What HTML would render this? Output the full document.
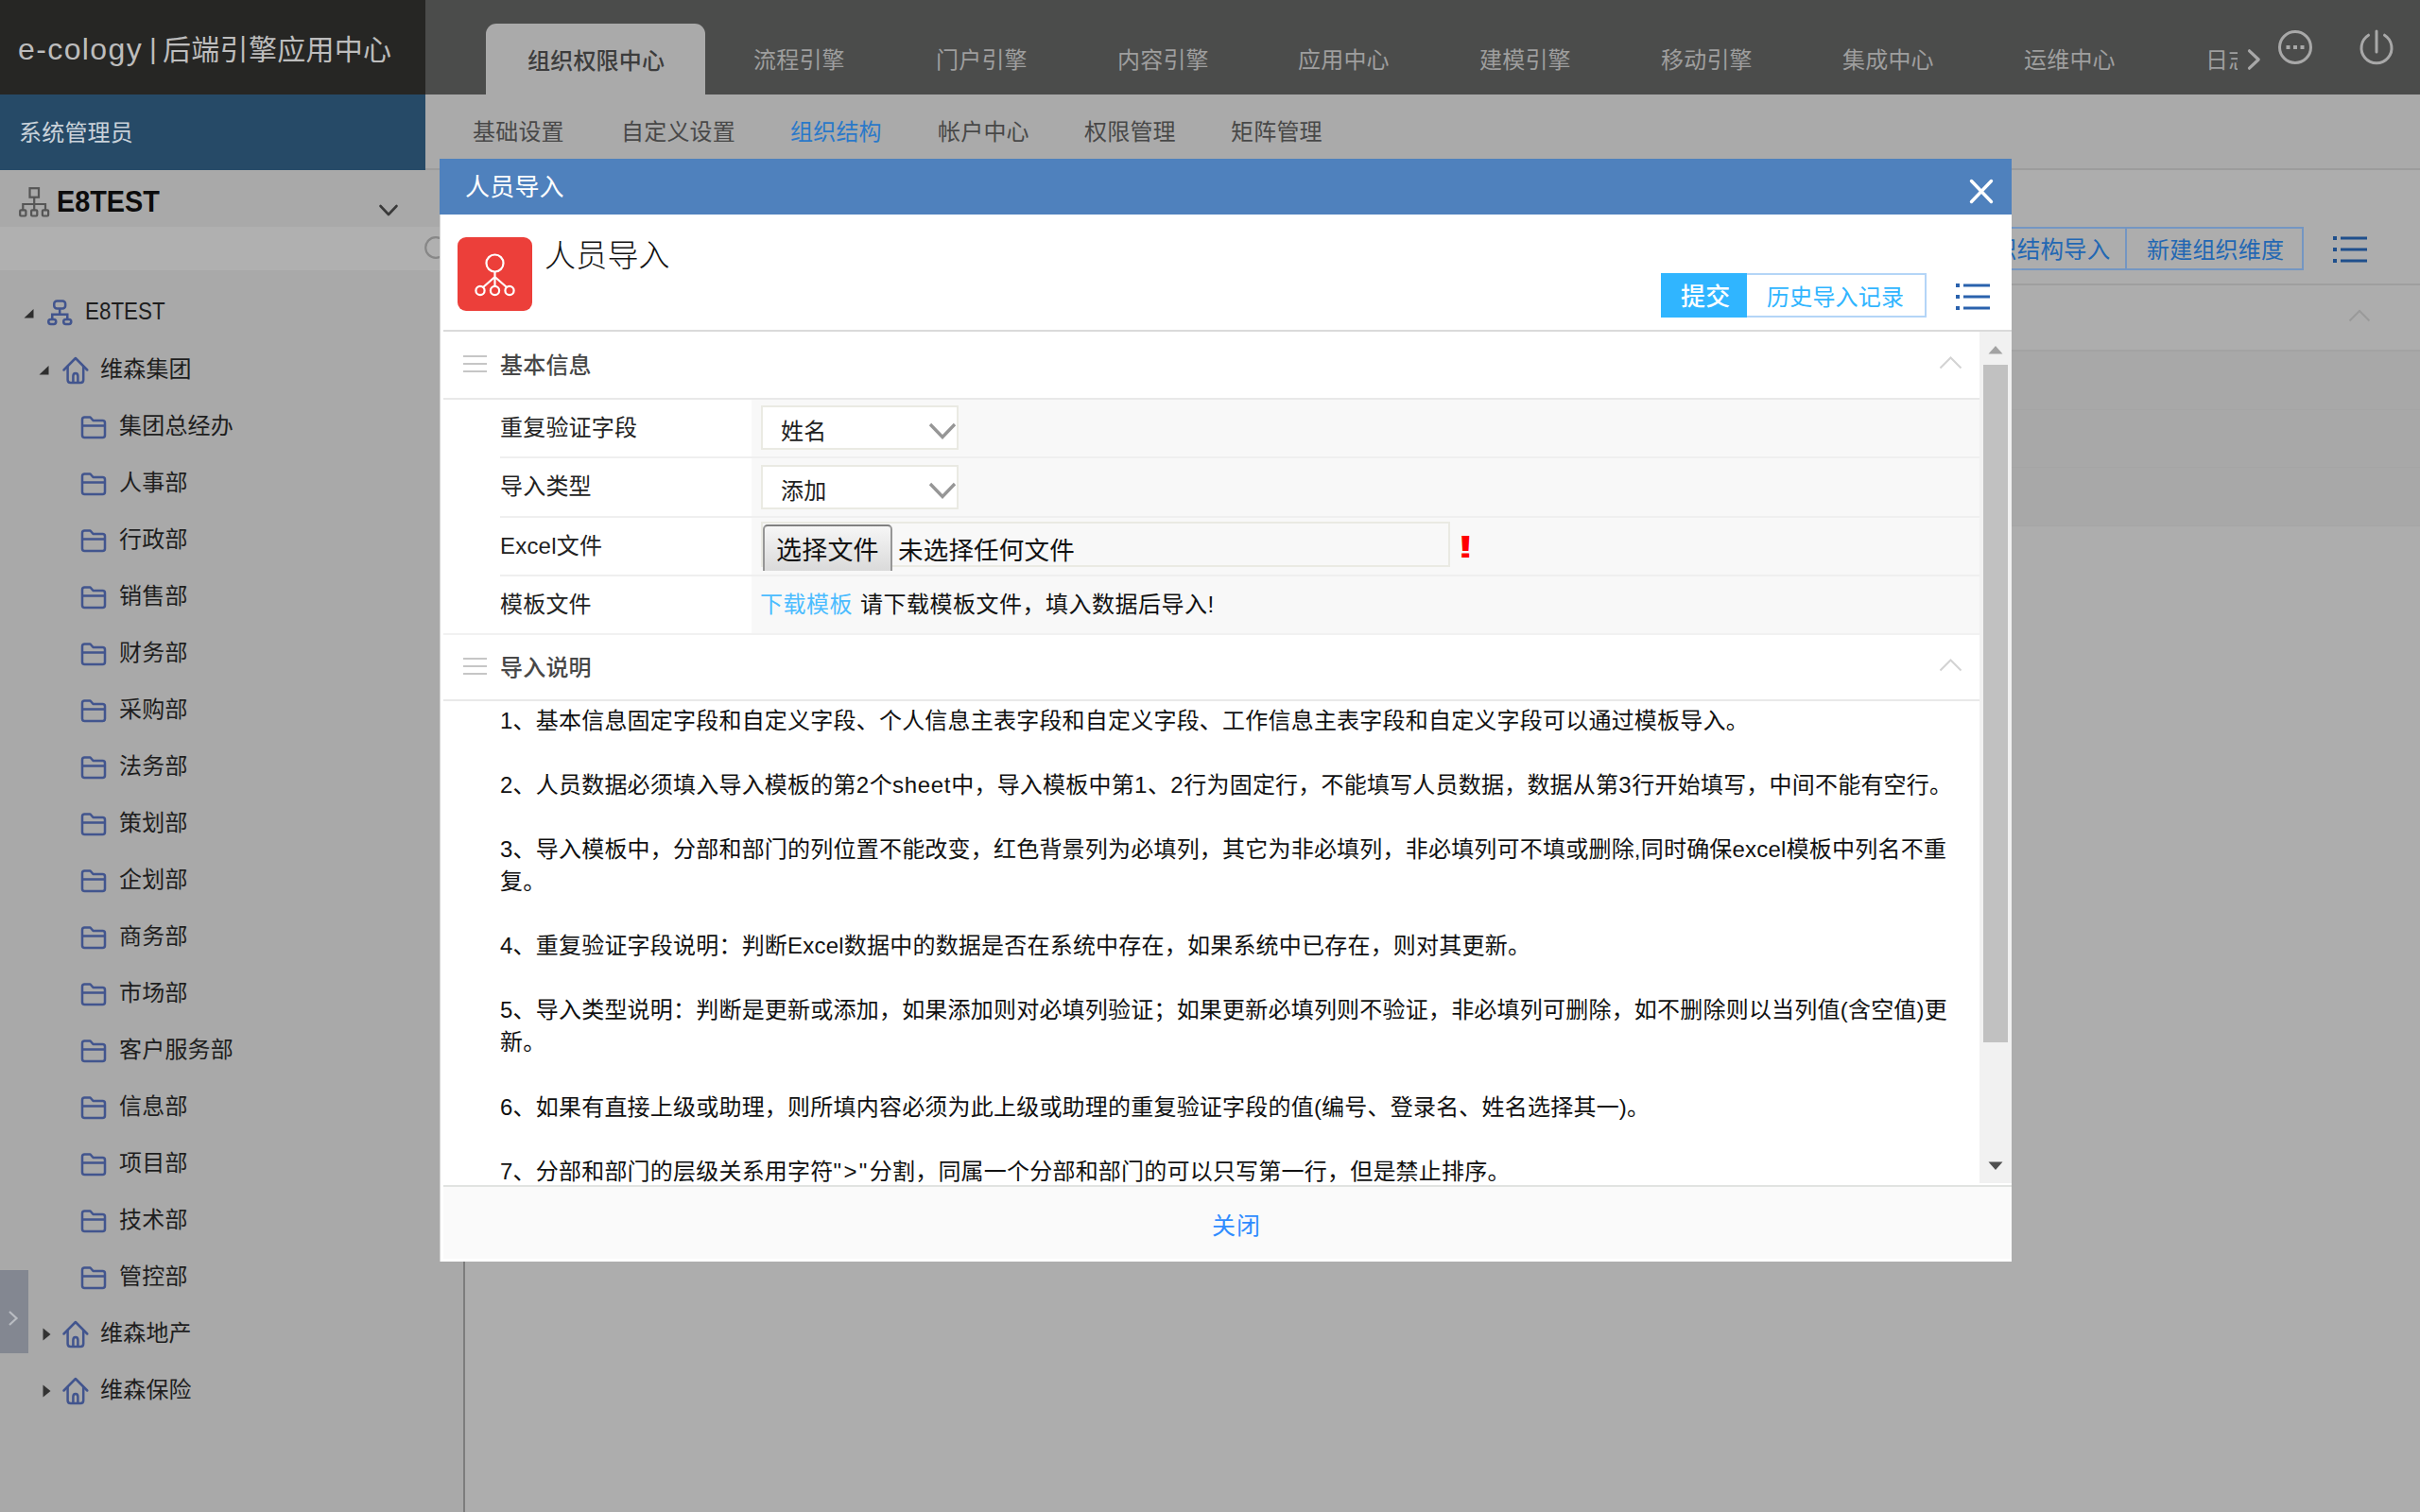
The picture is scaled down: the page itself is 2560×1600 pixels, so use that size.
<!DOCTYPE html><html lang="zh-CN"><head><meta charset="utf-8"><title>人员导入</title><style>
*{box-sizing:border-box;margin:0;padding:0}
html,body{width:2560px;height:1600px;overflow:hidden}
body{position:relative;background:#adadad;font-family:"Liberation Sans","Noto Sans CJK SC",sans-serif;font-size:24px;color:#222;-webkit-font-smoothing:antialiased}
.abs{position:absolute}
.t{position:absolute;white-space:nowrap;line-height:1;margin-top:2px;letter-spacing:.2px}
svg{position:absolute;overflow:visible}
/* top bar */
#top{left:0;top:0;width:2560px;height:100px;background:#4b4c4b}
#logo{left:0;top:0;width:450px;height:100px;background:#262624}
#tab{left:514px;top:25px;width:232px;height:75px;background:#aaaaaa;border-radius:11px 11px 0 0}
.nav{color:#9e9e9e;font-size:24px;top:50px}
#sub{left:450px;top:100px;width:2110px;height:80px;background:#aaaaaa;border-bottom:2px solid #9c9c9c}
#user{left:0;top:100px;width:450px;height:80px;background:#264a67}
.sn{color:#484848;font-size:24px;top:126px}
/* left */
#left{left:0;top:180px;width:491.5px;height:1420px;background:#a9a9a9;border-right:2.5px solid #7d7d7d}
#lh{left:0;top:180px;width:488px;height:60px;background:#a9a9a9}
#ls{left:0;top:239.5px;width:488px;height:46px;background:#b0b0b0}
.tr{font-size:24px;color:#1e1e1e}
i{font-style:normal;letter-spacing:.7px}
/* dialog */
#dlg{left:465px;top:168px;width:1663px;height:1167px;background:#fff}
#dt{left:0;top:0;width:1663px;height:59px;background:#4f81bd}
.row{position:absolute;left:0;width:1629px}
.lab{font-size:24px;color:#222;left:64px}
.sel{position:absolute;left:340px;width:209px;height:47px;border:2px solid #eaeae3;background:#fff}
</style></head><body>
<div id="top" class="abs"></div><div id="logo" class="abs"></div>
<div class="t" style="left:19px;top:34px;font-size:32px;color:#bdbdbd;letter-spacing:1.4px">e-cology</div>
<div class="t" style="left:158px;top:35px;font-size:30px;color:#bdbdbd;letter-spacing:0">|</div>
<div class="t" style="left:172px;top:36px;font-size:30px;color:#bdbdbd;letter-spacing:.3px">后端引擎应用中心</div>
<div id="tab" class="abs"></div>
<div class="t" style="left:558px;top:51px;font-size:24px;color:#3c3c3c;font-weight:500">组织权限中心</div>
<div class="t nav" style="left:797px">流程引擎</div>
<div class="t nav" style="left:990px">门户引擎</div>
<div class="t nav" style="left:1182px">内容引擎</div>
<div class="t nav" style="left:1373px">应用中心</div>
<div class="t nav" style="left:1565px">建模引擎</div>
<div class="t nav" style="left:1757px">移动引擎</div>
<div class="t nav" style="left:1949px">集成中心</div>
<div class="t nav" style="left:2141px">运维中心</div>
<div class="t nav" style="left:2333px;width:34px;overflow:hidden">日志</div>
<svg style="left:2374px;top:48px" width="22" height="30" viewBox="0 0 22 30"><path d="M5.5 5.8 L15.2 15 L5.5 24.2" fill="none" stroke="#a8a8a8" stroke-width="3.2" stroke-linecap="round" stroke-linejoin="round"/></svg>
<svg style="left:2408px;top:30px" width="40" height="40" viewBox="0 0 40 40"><circle cx="20" cy="20" r="16.5" fill="none" stroke="#a8a8a8" stroke-width="3"/><rect x="10.5" y="18" width="4" height="4" fill="#a8a8a8"/><rect x="18" y="18" width="4" height="4" fill="#a8a8a8"/><rect x="25.5" y="18" width="4" height="4" fill="#a8a8a8"/></svg>
<svg style="left:2494px;top:30px" width="40" height="40" viewBox="0 0 40 40"><path d="M11.5 7.2 A16 16 0 1 0 28.5 7.2" fill="none" stroke="#a8a8a8" stroke-width="3" stroke-linecap="round"/><path d="M20 3 V25" stroke="#a8a8a8" stroke-width="3" stroke-linecap="round"/></svg>
<div id="sub" class="abs"></div><div id="user" class="abs"></div>
<div class="t" style="left:20px;top:127px;font-size:24px;color:#c9d2da">系统管理员</div>
<div class="t sn" style="left:500px">基础设置</div>
<div class="t sn" style="left:657px">自定义设置</div>
<div class="t sn" style="left:836px;color:#2a79c9">组织结构</div>
<div class="t sn" style="left:992px">帐户中心</div>
<div class="t sn" style="left:1147px">权限管理</div>
<div class="t sn" style="left:1302px">矩阵管理</div>
<div id="left" class="abs"></div><div id="lh" class="abs"></div><div id="ls" class="abs"></div>
<svg style="left:20px;top:198px" width="32" height="32" viewBox="0 0 32 32" fill="none" stroke="#565656" stroke-width="2.2"><rect x="11.5" y="1.2" width="9.5" height="9.5"/><path d="M16.2 10.7 V18 M4.3 24 V18 H28 V24 M16.2 18 V24"/><rect x="1.2" y="24.3" width="6.2" height="6.2" rx="1"/><rect x="13.1" y="24.3" width="6.2" height="6.2" rx="1"/><rect x="24.9" y="24.3" width="6.2" height="6.2" rx="1"/></svg>
<div class="t" style="left:60px;top:196px;font-size:31px;font-weight:700;color:#0c0c0c;letter-spacing:0;transform:scaleX(.93);transform-origin:0 50%">E8TEST</div>
<svg style="left:400px;top:215px" width="22" height="16" viewBox="0 0 22 16"><path d="M2.5 3 L11 12 L19.5 3" fill="none" stroke="#3a3a3a" stroke-width="2.6" stroke-linecap="round" stroke-linejoin="round"/></svg>
<svg style="left:447.5px;top:250px" width="26" height="26" viewBox="0 0 26 26"><circle cx="13" cy="12" r="10.8" fill="none" stroke="#878787" stroke-width="2.2"/></svg>
<svg style="left:25px;top:327px" width="11" height="10" viewBox="0 0 11 10"><path d="M10.5 0 V9.5 H0.5 Z" fill="#2e2e2e"/></svg>
<svg style="left:49px;top:317px" width="29" height="29" viewBox="0 0 29 29" fill="none" stroke="#42558e" stroke-width="2.5"><rect x="8.25" y="1.6" width="11.9" height="7.9" rx="3"/><path d="M14.2 9.5 V15.7 M6.25 21 V15.7 H22.25 V21"/><rect x="2.25" y="21" width="8" height="5" rx="2.4"/><rect x="18.2" y="21" width="8.1" height="5" rx="2.4"/></svg>
<div class="t tr" style="left:90px;top:314px;font-size:26.5px;letter-spacing:0;transform:scaleX(.845);transform-origin:0 50%">E8TEST</div>
<svg style="left:41px;top:387px" width="11" height="10" viewBox="0 0 11 10"><path d="M10.5 0 V9.5 H0.5 Z" fill="#2e2e2e"/></svg>
<svg style="left:65px;top:377px" width="30" height="30" viewBox="0 0 30 30" fill="none" stroke="#42558e" stroke-width="2.5" stroke-linejoin="round" stroke-linecap="round"><path d="M2.5 14.5 L14.9 2 L27.3 14.5"/><path d="M6.6 11 V25 Q6.6 28 9.6 28 H20.2 Q23.2 28 23.2 25 V11"/><path d="M12.4 27.5 V21 Q12.4 18 14.9 18 Q17.4 18 17.4 21 V27.5"/></svg>
<div class="t tr" style="left:106px;top:376.5px">维森集团</div>
<svg style="left:85px;top:440px" width="28" height="25" viewBox="0 0 28 25" fill="none" stroke="#42558e" stroke-width="2.5" stroke-linejoin="round"><path d="M2 4 Q2 1.5 4.5 1.5 H10.5 L13.5 5 H23.5 Q26 5 26 7.5 V20.5 Q26 23 23.5 23 H4.5 Q2 23 2 20.5 Z"/><path d="M2 10.5 H26"/></svg>
<div class="t tr" style="left:126px;top:436.5px">集团总经办</div>
<svg style="left:85px;top:500px" width="28" height="25" viewBox="0 0 28 25" fill="none" stroke="#42558e" stroke-width="2.5" stroke-linejoin="round"><path d="M2 4 Q2 1.5 4.5 1.5 H10.5 L13.5 5 H23.5 Q26 5 26 7.5 V20.5 Q26 23 23.5 23 H4.5 Q2 23 2 20.5 Z"/><path d="M2 10.5 H26"/></svg>
<div class="t tr" style="left:126px;top:496.5px">人事部</div>
<svg style="left:85px;top:560px" width="28" height="25" viewBox="0 0 28 25" fill="none" stroke="#42558e" stroke-width="2.5" stroke-linejoin="round"><path d="M2 4 Q2 1.5 4.5 1.5 H10.5 L13.5 5 H23.5 Q26 5 26 7.5 V20.5 Q26 23 23.5 23 H4.5 Q2 23 2 20.5 Z"/><path d="M2 10.5 H26"/></svg>
<div class="t tr" style="left:126px;top:556.5px">行政部</div>
<svg style="left:85px;top:620px" width="28" height="25" viewBox="0 0 28 25" fill="none" stroke="#42558e" stroke-width="2.5" stroke-linejoin="round"><path d="M2 4 Q2 1.5 4.5 1.5 H10.5 L13.5 5 H23.5 Q26 5 26 7.5 V20.5 Q26 23 23.5 23 H4.5 Q2 23 2 20.5 Z"/><path d="M2 10.5 H26"/></svg>
<div class="t tr" style="left:126px;top:616.5px">销售部</div>
<svg style="left:85px;top:680px" width="28" height="25" viewBox="0 0 28 25" fill="none" stroke="#42558e" stroke-width="2.5" stroke-linejoin="round"><path d="M2 4 Q2 1.5 4.5 1.5 H10.5 L13.5 5 H23.5 Q26 5 26 7.5 V20.5 Q26 23 23.5 23 H4.5 Q2 23 2 20.5 Z"/><path d="M2 10.5 H26"/></svg>
<div class="t tr" style="left:126px;top:676.5px">财务部</div>
<svg style="left:85px;top:740px" width="28" height="25" viewBox="0 0 28 25" fill="none" stroke="#42558e" stroke-width="2.5" stroke-linejoin="round"><path d="M2 4 Q2 1.5 4.5 1.5 H10.5 L13.5 5 H23.5 Q26 5 26 7.5 V20.5 Q26 23 23.5 23 H4.5 Q2 23 2 20.5 Z"/><path d="M2 10.5 H26"/></svg>
<div class="t tr" style="left:126px;top:736.5px">采购部</div>
<svg style="left:85px;top:800px" width="28" height="25" viewBox="0 0 28 25" fill="none" stroke="#42558e" stroke-width="2.5" stroke-linejoin="round"><path d="M2 4 Q2 1.5 4.5 1.5 H10.5 L13.5 5 H23.5 Q26 5 26 7.5 V20.5 Q26 23 23.5 23 H4.5 Q2 23 2 20.5 Z"/><path d="M2 10.5 H26"/></svg>
<div class="t tr" style="left:126px;top:796.5px">法务部</div>
<svg style="left:85px;top:860px" width="28" height="25" viewBox="0 0 28 25" fill="none" stroke="#42558e" stroke-width="2.5" stroke-linejoin="round"><path d="M2 4 Q2 1.5 4.5 1.5 H10.5 L13.5 5 H23.5 Q26 5 26 7.5 V20.5 Q26 23 23.5 23 H4.5 Q2 23 2 20.5 Z"/><path d="M2 10.5 H26"/></svg>
<div class="t tr" style="left:126px;top:856.5px">策划部</div>
<svg style="left:85px;top:920px" width="28" height="25" viewBox="0 0 28 25" fill="none" stroke="#42558e" stroke-width="2.5" stroke-linejoin="round"><path d="M2 4 Q2 1.5 4.5 1.5 H10.5 L13.5 5 H23.5 Q26 5 26 7.5 V20.5 Q26 23 23.5 23 H4.5 Q2 23 2 20.5 Z"/><path d="M2 10.5 H26"/></svg>
<div class="t tr" style="left:126px;top:916.5px">企划部</div>
<svg style="left:85px;top:980px" width="28" height="25" viewBox="0 0 28 25" fill="none" stroke="#42558e" stroke-width="2.5" stroke-linejoin="round"><path d="M2 4 Q2 1.5 4.5 1.5 H10.5 L13.5 5 H23.5 Q26 5 26 7.5 V20.5 Q26 23 23.5 23 H4.5 Q2 23 2 20.5 Z"/><path d="M2 10.5 H26"/></svg>
<div class="t tr" style="left:126px;top:976.5px">商务部</div>
<svg style="left:85px;top:1040px" width="28" height="25" viewBox="0 0 28 25" fill="none" stroke="#42558e" stroke-width="2.5" stroke-linejoin="round"><path d="M2 4 Q2 1.5 4.5 1.5 H10.5 L13.5 5 H23.5 Q26 5 26 7.5 V20.5 Q26 23 23.5 23 H4.5 Q2 23 2 20.5 Z"/><path d="M2 10.5 H26"/></svg>
<div class="t tr" style="left:126px;top:1036.5px">市场部</div>
<svg style="left:85px;top:1100px" width="28" height="25" viewBox="0 0 28 25" fill="none" stroke="#42558e" stroke-width="2.5" stroke-linejoin="round"><path d="M2 4 Q2 1.5 4.5 1.5 H10.5 L13.5 5 H23.5 Q26 5 26 7.5 V20.5 Q26 23 23.5 23 H4.5 Q2 23 2 20.5 Z"/><path d="M2 10.5 H26"/></svg>
<div class="t tr" style="left:126px;top:1096.5px">客户服务部</div>
<svg style="left:85px;top:1160px" width="28" height="25" viewBox="0 0 28 25" fill="none" stroke="#42558e" stroke-width="2.5" stroke-linejoin="round"><path d="M2 4 Q2 1.5 4.5 1.5 H10.5 L13.5 5 H23.5 Q26 5 26 7.5 V20.5 Q26 23 23.5 23 H4.5 Q2 23 2 20.5 Z"/><path d="M2 10.5 H26"/></svg>
<div class="t tr" style="left:126px;top:1156.5px">信息部</div>
<svg style="left:85px;top:1220px" width="28" height="25" viewBox="0 0 28 25" fill="none" stroke="#42558e" stroke-width="2.5" stroke-linejoin="round"><path d="M2 4 Q2 1.5 4.5 1.5 H10.5 L13.5 5 H23.5 Q26 5 26 7.5 V20.5 Q26 23 23.5 23 H4.5 Q2 23 2 20.5 Z"/><path d="M2 10.5 H26"/></svg>
<div class="t tr" style="left:126px;top:1216.5px">项目部</div>
<svg style="left:85px;top:1280px" width="28" height="25" viewBox="0 0 28 25" fill="none" stroke="#42558e" stroke-width="2.5" stroke-linejoin="round"><path d="M2 4 Q2 1.5 4.5 1.5 H10.5 L13.5 5 H23.5 Q26 5 26 7.5 V20.5 Q26 23 23.5 23 H4.5 Q2 23 2 20.5 Z"/><path d="M2 10.5 H26"/></svg>
<div class="t tr" style="left:126px;top:1276.5px">技术部</div>
<svg style="left:85px;top:1340px" width="28" height="25" viewBox="0 0 28 25" fill="none" stroke="#42558e" stroke-width="2.5" stroke-linejoin="round"><path d="M2 4 Q2 1.5 4.5 1.5 H10.5 L13.5 5 H23.5 Q26 5 26 7.5 V20.5 Q26 23 23.5 23 H4.5 Q2 23 2 20.5 Z"/><path d="M2 10.5 H26"/></svg>
<div class="t tr" style="left:126px;top:1336.5px">管控部</div>
<svg style="left:45px;top:1405px" width="9" height="14" viewBox="0 0 9 14"><path d="M0.5 0.5 L8.5 7 L0.5 13.5 Z" fill="#333"/></svg>
<svg style="left:65px;top:1397px" width="30" height="30" viewBox="0 0 30 30" fill="none" stroke="#42558e" stroke-width="2.5" stroke-linejoin="round" stroke-linecap="round"><path d="M2.5 14.5 L14.9 2 L27.3 14.5"/><path d="M6.6 11 V25 Q6.6 28 9.6 28 H20.2 Q23.2 28 23.2 25 V11"/><path d="M12.4 27.5 V21 Q12.4 18 14.9 18 Q17.4 18 17.4 21 V27.5"/></svg>
<div class="t tr" style="left:106px;top:1396.5px">维森地产</div>
<svg style="left:45px;top:1465px" width="9" height="14" viewBox="0 0 9 14"><path d="M0.5 0.5 L8.5 7 L0.5 13.5 Z" fill="#333"/></svg>
<svg style="left:65px;top:1457px" width="30" height="30" viewBox="0 0 30 30" fill="none" stroke="#42558e" stroke-width="2.5" stroke-linejoin="round" stroke-linecap="round"><path d="M2.5 14.5 L14.9 2 L27.3 14.5"/><path d="M6.6 11 V25 Q6.6 28 9.6 28 H20.2 Q23.2 28 23.2 25 V11"/><path d="M12.4 27.5 V21 Q12.4 18 14.9 18 Q17.4 18 17.4 21 V27.5"/></svg>
<div class="t tr" style="left:106px;top:1456.5px">维森保险</div>
<div class="abs" style="left:0;top:1344px;width:30px;height:88px;background:#838791"></div>
<svg style="left:7px;top:1386px" width="14" height="18" viewBox="0 0 14 18"><path d="M3 2 L10.5 9 L3 16" fill="none" stroke="#b9bcc2" stroke-width="2.2"/></svg>
<div class="abs" style="left:492px;top:300px;width:2068px;height:2px;background:#9f9f9f"></div>
<div class="abs" style="left:492px;top:370px;width:2068px;height:2px;background:#a3a3a3"></div>
<div class="abs" style="left:2128px;top:372px;width:432px;height:185px;background:#a8a8a8"></div>
<div class="abs" style="left:2128px;top:433px;width:432px;height:1px;background:#a5a5a5"></div>
<div class="abs" style="left:2128px;top:494px;width:432px;height:1px;background:#a5a5a5"></div>
<div class="abs" style="left:2128px;top:556px;width:432px;height:1px;background:#a5a5a5"></div>
<div class="abs" style="left:2060px;top:240px;width:190px;height:46px;border:2px solid #7496c2"></div>
<div class="abs" style="left:2248px;top:240px;width:189px;height:46px;border:2px solid #7496c2"></div>
<div class="t" style="left:2109px;top:251px;font-size:24.5px;color:#2267b3">织结构导入</div>
<div class="t" style="left:2271px;top:251px;font-size:24px;color:#2267b3">新建组织维度</div>
<svg style="left:2468px;top:250px" width="36" height="28" viewBox="0 0 36 28" fill="#1f4f8c"><rect x="0" y="0" width="4" height="4"/><rect x="8" y="0.5" width="28" height="3"/><rect x="0" y="12" width="4" height="4"/><rect x="8" y="12.5" width="28" height="3"/><rect x="0" y="24" width="4" height="4"/><rect x="8" y="24.5" width="28" height="3"/></svg>
<svg style="left:2484px;top:327px" width="24" height="14" viewBox="0 0 24 14"><path d="M1.5 12.5 L12 2 L22.5 12.5" fill="none" stroke="#9a9a9a" stroke-width="2"/></svg>
<div id="dlg" class="abs">
<div class="abs" style="left:0;top:59px;width:1px;height:1108px;background:#d4d4d4"></div>
<div id="dt" class="abs"></div>
<div class="t" style="left:27px;top:15px;font-size:26px;color:#fff">人员导入</div>
<svg style="left:1618px;top:21px" width="26" height="27" viewBox="0 0 26 27"><path d="M2.5 2.5 L23.5 24.5 M23.5 2.5 L2.5 24.5" stroke="#fff" stroke-width="3.4" stroke-linecap="round"/></svg>
<div class="abs" style="left:19px;top:83px;width:79px;height:78px;background:#ec3f3a;border-radius:9px"></div>
<svg style="left:19px;top:83px" width="79" height="78" viewBox="0 0 79 78" fill="none" stroke="#fff" stroke-width="2.2"><circle cx="39.5" cy="27.5" r="9"/><path d="M39.5 36.5 V52 M39.5 42 L27 53 M39.5 42 L52 53"/><circle cx="24" cy="56.5" r="4.6"/><circle cx="39.5" cy="56.5" r="4.6"/><circle cx="55" cy="56.5" r="4.6"/></svg>
<div class="t" style="left:111px;top:84px;font-size:33px;color:#111;font-weight:300">人员导入</div>
<div class="abs" style="left:1292px;top:121px;width:92px;height:47px;background:#30b5ff"></div>
<div class="t" style="left:1313px;top:131px;font-size:26px;color:#fff;font-weight:500">提交</div>
<div class="abs" style="left:1383px;top:121px;width:190px;height:47px;border:2px solid #b4d5f7;border-left:0;background:#fff"></div>
<div class="t" style="left:1404px;top:133px;font-size:24px;color:#30b5ff">历史导入记录</div>
<svg style="left:1604px;top:132px" width="36" height="28" viewBox="0 0 36 28" fill="#2a62ad"><rect x="0" y="0" width="4" height="4"/><rect x="8" y="0.5" width="28" height="3"/><rect x="0" y="12" width="4" height="4"/><rect x="8" y="12.5" width="28" height="3"/><rect x="0" y="24" width="4" height="4"/><rect x="8" y="24.5" width="28" height="3"/></svg>
<div class="abs" style="left:4px;top:181px;width:1659px;height:2px;background:#dadada"></div>
<div class="abs" style="left:1629px;top:183px;width:34px;height:901px;background:#f1f1f1"></div>
<div class="abs" style="left:1633px;top:218px;width:26px;height:717px;background:#c1c1c1"></div>
<svg style="left:1638px;top:197px" width="16" height="10" viewBox="0 0 16 10"><path d="M0.5 9.5 L8 1 L15.5 9.5 Z" fill="#a3a3a3"/></svg>
<svg style="left:1638px;top:1061px" width="16" height="10" viewBox="0 0 16 10"><path d="M0.5 0.5 L8 9 L15.5 0.5 Z" fill="#505050"/></svg>
<svg style="left:25px;top:208px" width="25" height="19" viewBox="0 0 25 19" fill="#c6c6c6"><rect x="0" y="0" width="25" height="2"/><rect x="0" y="8" width="25" height="2"/><rect x="0" y="16" width="25" height="2"/></svg>
<div class="t" style="left:64px;top:205px;font-size:24px;color:#484848;font-weight:500">基本信息</div>
<svg style="left:1586px;top:208px" width="25" height="15" viewBox="0 0 25 15"><path d="M1.5 13.5 L12.5 2.5 L23.5 13.5" fill="none" stroke="#d3d3d3" stroke-width="2"/></svg>
<div class="abs" style="left:4px;top:253px;width:1625px;height:2px;background:#e9e9e9"></div>
<div class="abs" style="left:330px;top:255px;width:1299px;height:248px;background:#f8f8f8"></div>
<div class="t lab" style="top:271px">重复验证字段</div>
<div class="t lab" style="top:333px">导入类型</div>
<div class="t lab" style="top:396px">Excel文件</div>
<div class="t lab" style="top:458px">模板文件</div>
<div class="abs" style="left:64px;top:315px;width:1565px;height:2px;background:#efefef"></div>
<div class="abs" style="left:64px;top:378px;width:1565px;height:2px;background:#efefef"></div>
<div class="abs" style="left:64px;top:440px;width:1565px;height:2px;background:#efefef"></div>
<div class="abs" style="left:4px;top:502px;width:1625px;height:2px;background:#f1f1f1"></div>
<div class="sel" style="top:261px"></div>
<div class="t" style="left:361px;top:275px;font-size:24px;color:#222">姓名</div>
<svg style="left:517px;top:278px" width="30" height="20" viewBox="0 0 30 20"><path d="M2 3 L15 16.5 L28 3" fill="none" stroke="#969696" stroke-width="3.3"/></svg>
<div class="sel" style="top:324px"></div>
<div class="t" style="left:361px;top:338px;font-size:24px;color:#222">添加</div>
<svg style="left:517px;top:341px" width="30" height="20" viewBox="0 0 30 20"><path d="M2 3 L15 16.5 L28 3" fill="none" stroke="#969696" stroke-width="3.3"/></svg>
<div class="abs" style="left:340px;top:384px;width:729px;height:48px;border:2px solid #eaeae3;background:#f8f8f8"></div>
<div class="abs" style="left:341.5px;top:386.5px;width:137.5px;height:49px;border:2px solid #969696;border-top-color:#808080;border-bottom:0;border-radius:5px 5px 0 0;background:linear-gradient(#f6f6f6,#dadada)"></div>
<div class="t" style="left:356px;top:400px;font-size:27px;color:#111">选择文件</div>
<div class="t" style="left:485px;top:399.5px;font-size:26.5px;color:#111">未选择任何文件</div>
<div class="t" style="left:1075.5px;top:392px;font-size:33px;font-weight:700;color:#f00;transform:scaleX(1.7);transform-origin:0 0">!</div>
<div class="t" style="left:339px;top:458px;font-size:24px;color:#111;letter-spacing:.5px"><span style="color:#4bbcff">下载模板</span><span style="margin-left:8px">请下载模板文件，填入数据后导入!</span></div>
<svg style="left:25px;top:528px" width="25" height="19" viewBox="0 0 25 19" fill="#c6c6c6"><rect x="0" y="0" width="25" height="2"/><rect x="0" y="8" width="25" height="2"/><rect x="0" y="16" width="25" height="2"/></svg>
<div class="t" style="left:64px;top:525px;font-size:24px;color:#484848;font-weight:500">导入说明</div>
<svg style="left:1586px;top:528px" width="25" height="15" viewBox="0 0 25 15"><path d="M1.5 13.5 L12.5 2.5 L23.5 13.5" fill="none" stroke="#d3d3d3" stroke-width="2"/></svg>
<div class="abs" style="left:4px;top:571.5px;width:1625px;height:2px;background:#e9e9e9"></div>
<div class="abs" style="left:0;top:575px;width:1629px;height:510px;overflow:hidden"><div class="abs" style="left:64px;top:2.5px;font-size:24px;line-height:34.1px;color:#111;white-space:nowrap;letter-spacing:.21px">1、基本信息固定字段和自定义字段、个人信息主表字段和自定义字段、工作信息主表字段和自定义字段可以通过模板导入。<br><br>2、人员数据必须填入导入模板的第<i>2</i>个<i>sheet</i>中，导入模板中第<i>1</i>、<i>2</i>行为固定行，不能填写人员数据，数据从第<i>3</i>行开始填写，中间不能有空行。<br><br>3、导入模板中，分部和部门的列位置不能改变，红色背景列为必填列，其它为非必填列，非必填列可不填或删除,同时确保excel模板中列名不重<br>复。<br><br>4、重复验证字段说明：判断Excel数据中的数据是否在系统中存在，如果系统中已存在，则对其更新。<br><br>5、导入类型说明：判断是更新或添加，如果添加则对必填列验证；如果更新必填列则不验证，非必填列可删除，如不删除则以当列值(含空值)更<br>新。<br><br>6、如果有直接上级或助理，则所填内容必须为此上级或助理的重复验证字段的值(编号、登录名、姓名选择其一)。<br><br>7、分部和部门的层级关系用字符<i style="letter-spacing:2.4px">"&gt;"</i>分割，同属一个分部和部门的可以只写第一行，但是禁止排序。</div></div>
<div class="abs" style="left:4px;top:1085.5px;width:1659px;height:78.5px;background:#fafafa;border-top:2.5px solid #e1e3e1"></div>
<div class="t" style="left:817px;top:1115px;font-size:25px;color:#2f8cff;letter-spacing:1px">关闭</div>
</div>
</body></html>
